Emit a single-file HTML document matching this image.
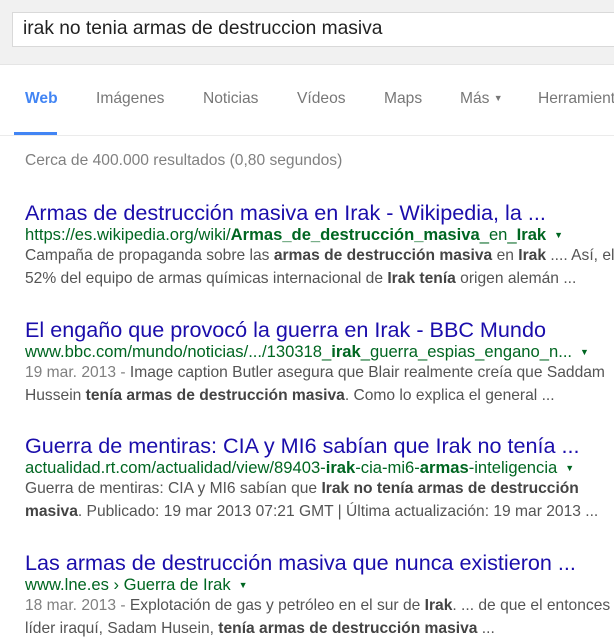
<!DOCTYPE html>
<html><head><meta charset="utf-8"><style>
body{margin:0;width:614px;height:635px;overflow:hidden;background:#fff;font-family:"Liberation Sans",Arial,sans-serif;}
.hdr{position:absolute;left:0;top:0;width:614px;height:64px;background:#f1f1f1;border-bottom:1px solid #e5e5e5;}
.sb{position:absolute;left:12px;top:12px;width:620px;height:35px;background:#fff;border:1px solid #d9d9d9;box-sizing:border-box;font-size:19.2px;color:#222;padding:5px 0 0 10px;}
.tabs{position:absolute;top:90px;left:0;font-size:15.6px;color:#777;white-space:nowrap;}
.tabs span{position:absolute;}
.ul{position:absolute;left:14px;top:132px;width:43px;height:3px;background:#4285f4;}
.line{position:absolute;left:0;top:135px;width:614px;height:1px;background:#ebebeb;}
.cnt{position:absolute;left:25px;top:152px;font-size:15.6px;color:#808080;}
.r{position:absolute;left:25px;white-space:nowrap;}
.t{font-size:21.6px;color:#1a0dab;line-height:24px;}
.u{font-size:16.6px;color:#006621;line-height:20px;}
.s{font-size:15.6px;color:#545454;line-height:22.5px;}
b{color:#444;}
.u b{color:#006621;}
.d{color:#808080;}
.ar{font-size:9px;color:#006621;margin-left:8px;vertical-align:2px;}
</style></head><body>
<div class="hdr"><div class="sb">irak no tenia armas de destruccion masiva</div></div>
<div class="tabs">
<span style="left:25px;color:#4285f4;font-weight:bold">Web</span>
<span style="left:96px">Imágenes</span>
<span style="left:203px">Noticias</span>
<span style="left:297px">Vídeos</span>
<span style="left:384px">Maps</span>
<span style="left:460px">Más <span style="position:static;font-size:9px;vertical-align:2px">▼</span></span>
<span style="left:538px">Herramientas</span>
</div>
<div class="ul"></div><div class="line"></div>
<div class="cnt">Cerca de 400.000 resultados (0,80 segundos)</div>

<div class="r" style="top:201px">
<div class="t">Armas de destrucción masiva en Irak - Wikipedia, la ...</div>
<div class="u">https://es.wikipedia.org/wiki/<b>Armas_de_destrucción_masiva</b>_en_<b>Irak</b><span class="ar">▼</span></div>
<div class="s">Campaña de propaganda sobre las <b>armas de destrucción masiva</b> en <b>Irak</b> .... Así, el<br>52% del equipo de armas químicas internacional de <b>Irak tenía</b> origen alemán ...</div>
</div>

<div class="r" style="top:318px">
<div class="t">El engaño que provocó la guerra en Irak - BBC Mundo</div>
<div class="u">www.bbc.com/mundo/noticias/.../130318_<b>irak</b>_guerra_espias_engano_n...<span class="ar">▼</span></div>
<div class="s"><span class="d">19 mar. 2013 - </span>Image caption Butler asegura que Blair realmente creía que Saddam<br>Hussein <b>tenía armas de destrucción masiva</b>. Como lo explica el general ...</div>
</div>

<div class="r" style="top:434px">
<div class="t">Guerra de mentiras: CIA y MI6 sabían que Irak no tenía ...</div>
<div class="u">actualidad.rt.com/actualidad/view/89403-<b>irak</b>-cia-mi6-<b>armas</b>-inteligencia<span class="ar">▼</span></div>
<div class="s">Guerra de mentiras: CIA y MI6 sabían que <b>Irak no tenía armas de destrucción</b><br><b>masiva</b>. Publicado: 19 mar 2013 07:21 GMT | Última actualización: 19 mar 2013 ...</div>
</div>

<div class="r" style="top:551px">
<div class="t">Las armas de destrucción masiva que nunca existieron ...</div>
<div class="u">www.lne.es › Guerra de Irak<span class="ar">▼</span></div>
<div class="s"><span class="d">18 mar. 2013 - </span>Explotación de gas y petróleo en el sur de <b>Irak</b>. ... de que el entonces<br>líder iraquí, Sadam Husein, <b>tenía armas de destrucción masiva</b> ...</div>
</div>
</body></html>
